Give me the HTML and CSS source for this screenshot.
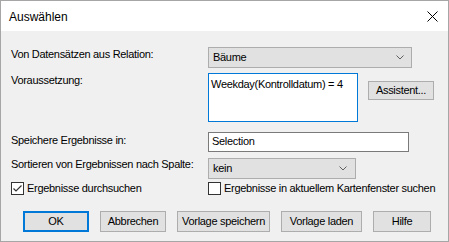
FILE: index.html
```html
<!DOCTYPE html>
<html>
<head>
<meta charset="utf-8">
<link rel="stylesheet" href="styles.css">
</head>
<body>
<div class="window">
  <div class="titlebar">
    <span class="title">Auswählen</span>
    <svg class="close" width="11" height="11" viewBox="0 0 11 11"><path d="M0.5 0.5 L10.5 10.5 M10.5 0.5 L0.5 10.5" stroke="#000" stroke-width="1" fill="none"/></svg>
  </div>
  <div class="content">
    <div class="row r1">
      <div class="label l1">Von Datensätzen aus Relation:</div>
      <div class="combo wide"><span>Bäume</span>
        <svg class="chev" width="8" height="5" viewBox="0 0 8 5"><polyline points="0.5,0.5 4,4 7.5,0.5" fill="none" stroke="#606060" stroke-width="1"/></svg>
      </div>
    </div>
    <div class="row r2">
      <div class="label l2">Voraussetzung:</div>
      <div class="textarea">Weekday(Kontrolldatum) = 4</div>
      <div class="btn assist">Assistent...</div>
    </div>
    <div class="row r3">
      <div class="label l3">Speichere Ergebnisse in:</div>
      <div class="input">Selection</div>
    </div>
    <div class="row r4">
      <div class="label l4">Sortieren von Ergebnissen nach Spalte:</div>
      <div class="combo narrow"><span>kein</span>
        <svg class="chev" width="8" height="5" viewBox="0 0 8 5"><polyline points="0.5,0.5 4,4 7.5,0.5" fill="none" stroke="#606060" stroke-width="1"/></svg>
      </div>
    </div>
    <div class="row r5">
      <div class="check first">
        <span class="box"><svg width="11" height="11" viewBox="0 0 11 11"><polyline points="1.5,5.5 4,8 9.5,2.5" fill="none" stroke="#333" stroke-width="1.2"/></svg></span>
        <span>Ergebnisse durchsuchen</span>
      </div>
      <div class="check">
        <span class="box"></span>
        <span>Ergebnisse in aktuellem Kartenfenster suchen</span>
      </div>
    </div>
    <div class="buttons">
      <div class="btn ok">OK</div>
      <div class="btn b2">Abbrechen</div>
      <div class="btn b3">Vorlage speichern</div>
      <div class="btn b4">Vorlage laden</div>
      <div class="btn b5">Hilfe</div>
    </div>
  </div>
</div>
</body>
</html>
```
FILE: styles.css
```css
* { box-sizing: border-box; }
html, body { margin: 0; padding: 0; background: #f0f0f0; }
body {
  font-family: "Liberation Sans", Arial, sans-serif;
  font-size: 11px;
  line-height: 13px;
  letter-spacing: -0.3px;
  color: #000;
}
.window {
  width: 449px;
  height: 242px;
  border: 1px solid #a6a6a6;
  background: #f0f0f0;
  display: flex;
  flex-direction: column;
}
.titlebar {
  height: 30px;
  background: #fff;
  display: flex;
  align-items: center;
  justify-content: space-between;
  padding: 0 10px 0 8px;
}
.title { font-size: 12px; line-height: 14px; padding-top: 1px; letter-spacing: 0; }
.close { display: block; }
.content {
  padding: 16px 0 0 10px;
  display: flex;
  flex-direction: column;
}
.row { display: flex; align-items: flex-start; white-space: nowrap; }
.label { width: 197px; white-space: nowrap; }
.l1 { padding-top: 1px; }
.l2 { padding-top: 1px; }
.l3 { padding-top: 2px; }
.l4 { padding-top: 0; }
.r2 { margin-top: 5px; }
.r3 { margin-top: 10px; }
.r4 { margin-top: 6px; }
.r5 { margin-top: 3px; }
.combo {
  height: 21px;
  background: #e1e1e1;
  border: 1px solid #adadad;
  display: flex;
  align-items: center;
  justify-content: space-between;
  padding: 0 7px 0 4px;
}
.combo.wide { width: 204px; }
.combo.narrow { width: 148px; padding-right: 8px; }
.chev { display: block; }
.textarea {
  width: 150px;
  height: 49px;
  background: #fff;
  border: 1px solid #0078d7;
  padding: 4px 2px;
  white-space: nowrap;
}
.btn {
  height: 21px;
  background: #e1e1e1;
  border: 1px solid #adadad;
  display: flex;
  align-items: center;
  justify-content: center;
  white-space: nowrap;
}
.assist {
  width: 66px;
  height: 19px;
  margin-left: 10px;
  margin-top: 8px;
}
.input {
  width: 201px;
  height: 20px;
  background: #fff;
  border: 1px solid #7a7a7a;
  padding: 2px 3px;
}
.check { display: flex; align-items: center; gap: 3px; white-space: nowrap; }
.check.first { width: 197px; }
.box {
  width: 13px;
  height: 13px;
  flex: none;
  border: 1px solid #333;
  background: #fff;
  display: flex;
  align-items: center;
  justify-content: center;
}
.box svg { display: block; }
.buttons {
  display: flex;
  margin-top: 16px;
  padding-left: 12px;
  gap: 11px;
}
.ok { width: 66px; border: 2px solid #0078d7; }
.b2 { width: 66px; }
.b3 { width: 93px; }
.b4 { width: 81px; }
.b5 { width: 58px; }
```
